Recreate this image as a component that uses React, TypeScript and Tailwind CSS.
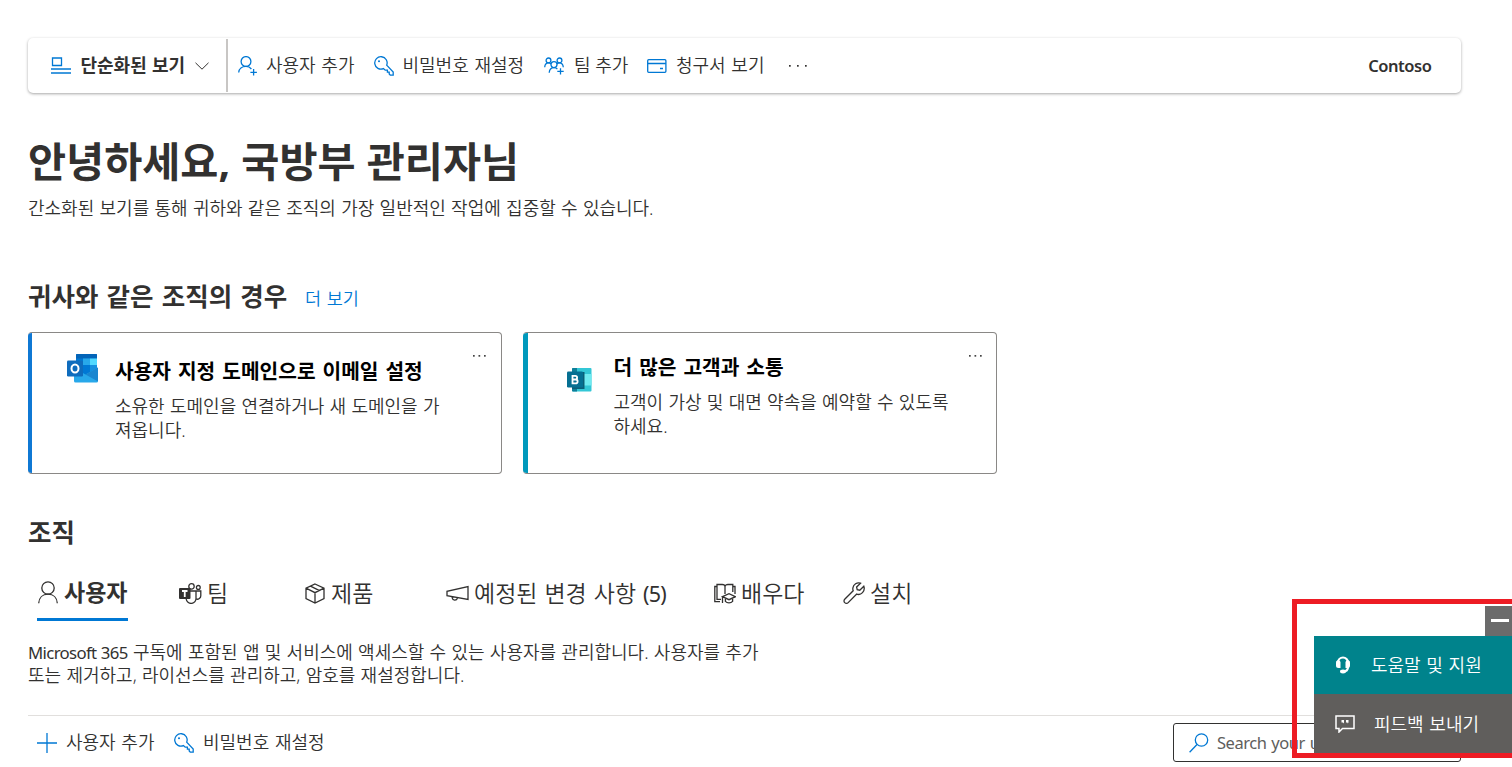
import type { ReactNode } from 'react';

function Svg({ className, box, children }: { className: string; box: string; children: ReactNode }) {
  return (
    <svg className={`shrink-0 ${className}`} viewBox={box} fill="none" stroke="currentColor" strokeWidth="1.3">
      {children}
    </svg>
  );
}

const KeyIcon = () => (
  <Svg className="h-[20px] w-[20px] text-[#0078d4]" box="0 0 20 20">
    <path d="M12.7 9.2A6.2 6.2 0 1 0 9.4 12.6L11.2 14.2H13.4V16.2H15.2V18L16.3 19.2H19.2V16.1L12.7 9.2Z" />
    <circle cx="5" cy="5.2" r="1" fill="currentColor" stroke="none" />
  </Svg>
);

const ViewIcon = () => (
  <Svg className="h-[17px] w-[20px] text-[#0078d4]" box="0 0 20 17">
    <path d="M1.5 1H10.5V8.5H1.5ZM0 12H20M0 16H20" />
  </Svg>
);

const PersonAddIcon = () => (
  <Svg className="h-[20px] w-[20px] text-[#0078d4]" box="0 0 20 20">
    <circle cx="8" cy="5.5" r="4.9" />
    <path d="M.7 16.5C1 12.8 4 10.4 8 10.4C10.4 10.4 12.2 11.4 13.4 13M15.6 13V19.5M12.4 16.3H18.9" />
  </Svg>
);

const TeamAddIcon = () => (
  <Svg className="h-[18px] w-[21px] text-[#0078d4]" box="0 0 21 18">
    <circle cx="4.5" cy="3.4" r="2.4" />
    <circle cx="15.5" cy="3.4" r="2.4" />
    <circle cx="10" cy="7.6" r="3" />
    <path d="M.7 10.2C.9 7.4 2.5 5.9 4.5 5.9C5.6 5.9 6.4 6.3 7 7M13 7C13.6 6.3 14.4 5.9 15.5 5.9C17.5 5.9 19 7.4 19.3 10.2M5.2 15.8C5.4 12.6 7.4 10.6 10 10.6C11.5 10.6 12.7 11.3 13.4 12.2M16.5 11.2V17.6M13.3 14.4H19.7" />
  </Svg>
);

const BillIcon = () => (
  <Svg className="h-[14px] w-[20px] text-[#0078d4]" box="0 0 20 14">
    <rect x=".7" y=".7" width="18.2" height="12.6" rx="1" />
    <path d="M.7 4.5H18.9M13 9.5H16" />
  </Svg>
);

const PersonIcon = () => (
  <Svg className="h-[23px] w-[20px]" box="0 0 20 23">
    <circle cx="10" cy="7" r="6.2" />
    <path d="M.7 22.3C1 16.7 4.7 13.2 10 13.2S19 16.7 19.3 22.3" />
  </Svg>
);

const TeamsIcon = () => (
  <Svg className="h-[21px] w-[23px]" box="0 0 23 21">
    <circle cx="12.5" cy="3.4" r="2.7" />
    <circle cx="19.3" cy="4.4" r="1.9" />
    <path d="M11 8H17V15A4.9 4.9 0 0 1 7.2 16V15M17 8H21.8V12.5A3.6 3.6 0 0 1 17 16" />
    <rect x="0" y="5" width="11.5" height="11" rx="1" fill="currentColor" stroke="none" />
    <path d="M3 8H8.5M5.75 8V14" stroke="#fff" strokeWidth="1.8" />
  </Svg>
);

const BoxIcon = () => (
  <Svg className="h-[21px] w-[20px]" box="0 0 20 21">
    <path d="M10 1L19 5.2V15.7L10 20L1 15.7V5.2ZM1 5.2L10 9.7L19 5.2M10 9.7V20M5.5 3.2L14.5 7.6" />
  </Svg>
);

const MegaphoneIcon = () => (
  <Svg className="h-[19px] w-[23px]" box="0 0 23 19">
    <path d="M22 2.5V15.5L1 11.7V7.3ZM6.2 12.7V13.9A2.7 2.7 0 0 0 11.4 14.3" />
  </Svg>
);

const LearnIcon = () => (
  <Svg className="h-[21px] w-[22px]" box="0 0 22 21">
    <path d="M7 16.3H3V1.5H8.2C9.7 1.5 11 2.2 11 3.5C11 2.2 12.4 1.5 14 1.5H18.8V9M11 3.5V11M3 3.5H.8V18.7H6M18.8 3.5H21V11" />
    <path d="M8.5 13.7L15 10.7L21.4 13.7L15 16.7ZM11.4 15.2V18.4C13.2 20.4 16.8 20.4 18.6 18.4V15.2M8.5 14V20" />
  </Svg>
);

const WrenchIcon = () => (
  <Svg className="h-[22px] w-[23px]" box="0 0 23 22">
    <path d="M20.8 4.2L16.8 8.2L14.2 7.6L13.6 5L17.5 1.2C14 .1 10.4 2.3 9.9 5.8C9.7 7 9.9 8 10.2 8.8L1.7 17.2A2.4 2.4 0 0 0 5.2 20.6L13.7 12.1C17.9 13.7 22.6 9.2 20.8 4.2Z" />
  </Svg>
);

const OutlookLogo = () => (
  <Svg className="h-[29px] w-[31px]" box="0 0 31 29">
    <g stroke="none">
      <path d="M9 1A1 1 0 0 1 10 0H29A1 1 0 0 1 30 1V16L18.5 22L9 18Z" fill="#0078d4" />
      <path d="M9 1A1 1 0 0 1 10 0H29A1 1 0 0 1 30 1V4.5H9Z" fill="#0364b8" />
      <path d="M16 4.5H23V11H16Z" fill="#28a8ea" />
      <path d="M23 4.5H30V11H23Z" fill="#50d9ff" />
      <path d="M16 11H23V17H16Z" fill="#0078d4" />
      <path d="M23 11H30V15L23 18Z" fill="#1490df" />
      <path d="M7 14V27A1.5 1.5 0 0 0 8.5 28.5H29.5A1.5 1.5 0 0 0 31 27V13.5L18.5 20.5Z" fill="#28a8ea" />
      <path d="M31 13.5V27.5L18.5 20.5Z" fill="#1a86d0" />
      <rect x="0" y="6.5" width="16" height="16" rx="1.2" fill="#0f6cbd" />
    </g>
    <ellipse cx="8" cy="14.5" rx="3.5" ry="4" stroke="#fff" strokeWidth="2" />
  </Svg>
);

const BookingsLogo = () => (
  <Svg className="h-[24px] w-[25px]" box="0 0 25 24">
    <g stroke="none">
      <rect x="5" y="0" width="19.5" height="23.5" rx="1" fill="#33c7d6" />
      <path d="M6 0H10V23.5H6A1 1 0 0 1 5 22.5V1A1 1 0 0 1 6 0Z" fill="#0f7f99" />
      <path d="M16 6H24.5V17.5H16Z" fill="#6feaf0" />
      <rect x="5" y="4" width="12.5" height="17" fill="#0a5f78" />
      <rect x="0" y="3.5" width="16" height="16" rx="1.2" fill="#056f92" />
    </g>
    <path d="M5.5 7.9H8.3A1.8 1.8 0 0 1 8.3 11.5H5.5ZM5.5 11.5H8.7A1.9 1.9 0 0 1 8.7 15.3H5.5Z" stroke="#fff" strokeWidth="1.8" />
  </Svg>
);

const Dots = ({ className, step }: { className: string; step: number }) => (
  <svg className={`shrink-0 ${className}`} viewBox="0 0 20 4" fill="currentColor">
    <rect x="1" y="1" width="1.7" height="1.7" />
    <rect x={1 + step} y="1" width="1.7" height="1.7" />
    <rect x={1 + 2 * step} y="1" width="1.7" height="1.7" />
  </svg>
);

const Label = ({ className = '', children }: { className?: string; children: ReactNode }) => (
  <span className={`shrink-0 whitespace-nowrap ${className}`}>{children}</span>
);

function Card({ accent, logo, title, lines, bodyClass, dotsClass }: { accent: string; logo: ReactNode; title: string; lines: string[]; bodyClass: string; dotsClass: string }) {
  return (
    <article className="flex h-[142px] w-[474px] overflow-hidden rounded-[4px] border border-[#8a8886] border-l-0">
      <div className={`shrink-0 ${accent}`} />
      {logo}
      <div className={`w-[350px] shrink-0 ${bodyClass}`}>
        <h3 className="h-[28px] whitespace-nowrap text-[20.3px] leading-[28px] font-bold text-black [word-spacing:1.7px]">{title}</h3>
        <p className="mt-[9px] whitespace-nowrap leading-[24px] [word-spacing:0.6px]">
          {lines[0]}
          <br />
          {lines[1]}
        </p>
      </div>
      <Dots className={`mt-[21px] h-[4px] w-[20px] text-[#444] ${dotsClass}`} step={5.5} />
    </article>
  );
}

export default function App() {
  return (
    <div className="relative h-[767px] w-[1512px] overflow-hidden bg-white pt-[38px] pl-[28px] font-['Noto_Sans','Noto_Sans_CJK_KR',sans-serif] text-[18px] font-[350] text-[#323130] [word-spacing:1px]">
      <header className="flex h-[55px] w-[1433px] items-center rounded-[5px] shadow-[0_1px_3px_rgba(0,0,0,0.35)]">
        <div className="flex h-full w-[198px] items-center pl-[23px]">
          <ViewIcon />
          <Label className="ml-[9.5px] font-bold [word-spacing:0.5px]">단순화된 보기</Label>
          <Svg className="ml-[10px] h-[8px] w-[14px]" box="0 0 14 8"><path d="M.5 .8L7 7.2L13.5 .8" strokeWidth="1" /></Svg>
        </div>
        <div className="h-[53px] w-[2px] bg-[#c8c6c4]" />
        <div className="flex w-[136px] items-center gap-[8px] pl-[10px]"><PersonAddIcon /><Label>사용자 추가</Label></div>
        <div className="flex w-[170px] items-center gap-[9px] pl-[9.5px]"><KeyIcon /><Label>비밀번호 재설정</Label></div>
        <div className="flex w-[103px] items-center gap-[9px] pl-[10px]"><TeamAddIcon /><Label className="[word-spacing:0px]">팀 추가</Label></div>
        <div className="flex w-[151px] items-center gap-[9px] pl-[10px]"><BillIcon /><Label>청구서 보기</Label></div>
        <Dots className="h-[4px] w-[20px]" step={8} />
        <Label className="mt-[2px] mr-[29.5px] ml-auto text-[16.5px] font-semibold tracking-[-0.45px]">Contoso</Label>
      </header>

      <h1 className="mt-[38px] h-[60px] whitespace-nowrap text-[41.4px] leading-[60px] font-bold [word-spacing:0.4px]">안녕하세요, 국방부 관리자님</h1>
      <p className="mt-[5px] h-[24px] whitespace-nowrap leading-[24px] [word-spacing:0.6px]">간소화된 보기를 통해 귀하와 같은 조직의 가장 일반적인 작업에 집중할 수 있습니다.</p>

      <div className="mt-[59px] flex h-[34px] items-center">
        <h2 className="w-[277px] whitespace-nowrap text-[25.5px] font-bold [word-spacing:1.6px]">귀사와 같은 조직의 경우</h2>
        <a className="mt-[4px] text-[17.5px] text-[#0078d4]">더 보기</a>
      </div>

      <section className="mt-[19px] flex gap-[21px]">
        <Card
          accent="w-[4px] bg-[#0f78d4]"
          logo={<div className="w-[83px] shrink-0 pt-[21px] pl-[35px]"><OutlookLogo /></div>}
          title="사용자 지정 도메인으로 이메일 설정"
          lines={['소유한 도메인을 연결하거나 새 도메인을 가', '져옵니다.']}
          bodyClass="pt-[24px]"
          dotsClass="ml-[7px]"
        />
        <Card
          accent="w-[5px] bg-[#0099bc]"
          logo={<div className="w-[85.5px] shrink-0 pt-[35px] pl-[39px]"><BookingsLogo /></div>}
          title="더 많은 고객과 소통"
          lines={['고객이 가상 및 대면 약속을 예약할 수 있도록', '하세요.']}
          bodyClass="pt-[20px]"
          dotsClass="ml-[4px]"
        />
      </section>

      <h2 className="mt-[41px] h-[34px] text-[25.5px] leading-[34px] font-bold">조직</h2>

      <nav className="mt-[26px] flex h-[46px] text-[23px]">
        <div className="ml-[9px] flex w-[91px] items-center gap-[6px] border-b-[3px] border-[#0078d4] pb-[8px] pl-[1px]"><PersonIcon /><Label className="font-bold">사용자</Label></div>
        <div className="ml-[51px] flex w-[126px] items-center gap-[5px] pb-[10px]"><TeamsIcon /><Label>팀</Label></div>
        <div className="flex w-[141px] items-center gap-[6px] pb-[10px]"><BoxIcon /><Label>제품</Label></div>
        <div className="flex w-[268px] items-center gap-[5px] pb-[10px]"><MegaphoneIcon /><Label>예정된 변경 사항 <span className="text-[21.5px] font-normal tracking-[-0.8px]">(5)</span></Label></div>
        <div className="flex w-[129px] items-center gap-[5px] pb-[10px]"><LearnIcon /><Label>배우다</Label></div>
        <div className="flex items-center gap-[4px] pb-[10px]"><WrenchIcon /><Label>설치</Label></div>
      </nav>

      <p className="mt-[20px] h-[45px] whitespace-nowrap leading-[22px] [word-spacing:0.6px]">
        <span className="text-[16.8px] font-normal tracking-[-0.65px]">Microsoft 365</span> 구독에 포함된 앱 및 서비스에 액세스할 수 있는 사용자를 관리합니다. 사용자를 추가
        <br />
        또는 제거하고, 라이선스를 관리하고, 암호를 재설정합니다.
      </p>

      <div className="mt-[29px] flex h-[52px] w-[1433px] items-start border-t border-[#e1dfdd] pt-[7px]">
        <div className="flex h-[39px] w-[136px] items-center gap-[9px] pl-[9px]">
          <Svg className="h-[20px] w-[20px] text-[#0078d4]" box="0 0 20 20"><path d="M10 0V20M0 10H20" /></Svg>
          <Label>사용자 추가</Label>
        </div>
        <div className="flex h-[39px] items-center gap-[9px] pl-[10px]"><KeyIcon /><Label>비밀번호 재설정</Label></div>
        <div className="ml-auto flex h-[39px] w-[288px] items-center gap-[8px] rounded-[3px] border border-[#323130] pl-[15px] text-[#605e5c]">
          <Svg className="h-[20px] w-[20px] text-[#0078d4]" box="0 0 20 20"><circle cx="12.5" cy="7" r="6.2" /><path d="M8 11.5L.6 19.2" /></Svg>
          <Label className="mt-[2px] text-[16.5px] font-normal tracking-[-0.45px]">Search your users</Label>
        </div>
      </div>

      <aside className="absolute top-[599px] left-[1292px] h-[159px] w-[220px] text-white">
        <div className="flex flex-col items-end pt-[7px]">
          <div className="flex h-[30px] w-[27px] items-center bg-[#6b6b6b] pl-[6px]"><div className="mb-[2px] h-[3px] w-[18px] bg-white" /></div>
          <div className="flex h-[58px] w-[198px] items-center bg-[#00838c] pl-[21px]">
            <Svg className="h-[18px] w-[16px]" box="0 0 16 18">
              <path d="M3 11V6.5A5 5 0 0 1 13 6.5V11C13 14 11.5 15.5 8 15.5" strokeWidth="2.2" />
              <path d="M1 7A2.2 2.2 0 0 1 5.5 6V12H3.5A2.5 2.5 0 0 1 1 9.5ZM15 7A2.2 2.2 0 0 0 10.5 6V12H12.5A2.5 2.5 0 0 0 15 9.5Z" fill="currentColor" stroke="none" />
              <ellipse cx="8" cy="15.5" rx="3" ry="1.9" fill="currentColor" stroke="none" />
            </Svg>
            <Label className="ml-[20px]">도움말 및 지원</Label>
          </div>
          <div className="flex h-[59px] w-[198px] items-center bg-[#605e5c] pl-[21px]">
            <Svg className="h-[18px] w-[20px]" box="0 0 20 18"><path d="M1 1H19V13.5H7.5L4 17V13.5H1Z" strokeWidth="1.5" /><path d="M6.5 5H9V7.5L8 8.5V7.5H6.5ZM11 5H13.5V7.5L12.5 8.5V7.5H11Z" fill="currentColor" stroke="none" /></Svg>
            <Label className="mt-[2px] ml-[19px]">피드백 보내기</Label>
          </div>
        </div>
        <div className="absolute inset-0 border-[5px] border-r-0 border-[#ed1c24]" />
      </aside>
    </div>
  );
}
